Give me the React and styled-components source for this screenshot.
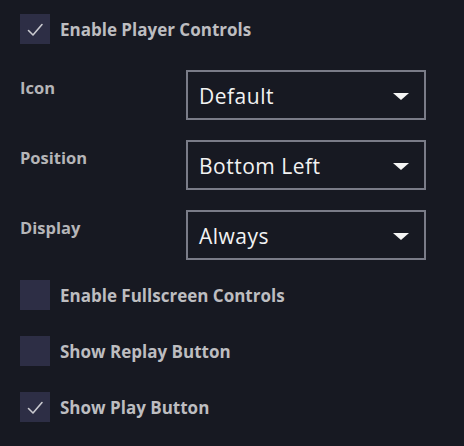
import React from "react";
import styled, { createGlobalStyle } from "styled-components";

const GlobalStyle = createGlobalStyle`
    html, body {
        margin: 0;
        padding: 0;
        background: #171922;
    }
    body {
        font-family: "Open Sans", "Noto Sans", sans-serif;
    }
`;

const options = [
    { label: "Icon", value: "Default" },
    { label: "Position", value: "Bottom Left" },
    { label: "Display", value: "Always" },
];

const toggles = [
    { label: "Enable Fullscreen Controls", checked: false },
    { label: "Show Replay Button", checked: false },
    { label: "Show Play Button", checked: true },
];

function CheckRow({ label, checked }) {
    return (
        <Row>
            <Box>
                {checked ? (
                    <svg width="30" height="30" viewBox="0 0 30 30">
                        <path
                            d="M8.5 16.5 L13 21 L22 10.5"
                            fill="none"
                            stroke="#c9c9cf"
                            strokeWidth="1.6"
                            strokeLinecap="round"
                            strokeLinejoin="round"
                        />
                    </svg>
                ) : null}
            </Box>
            <CheckLabel>{label}</CheckLabel>
        </Row>
    );
}

export default function App() {
    return (
        <>
            <GlobalStyle />
            <Panel>
                <CheckRow label="Enable Player Controls" checked />
                <Selects>
                    {options.map(o => (
                        <Field key={o.label}>
                            <FieldLabel>{o.label}</FieldLabel>
                            <Select>
                                <Value>{o.value}</Value>
                                <Caret />
                            </Select>
                        </Field>
                    ))}
                </Selects>
                <Toggles>
                    {toggles.map(t => (
                        <CheckRow key={t.label} label={t.label} checked={t.checked} />
                    ))}
                </Toggles>
            </Panel>
        </>
    );
}

const Panel = styled.div`
    width: 464px;
    height: 446px;
    box-sizing: border-box;
    padding: 14px 20px;
    display: flex;
    flex-direction: column;
    gap: 26px;
`;

const Row = styled.div`
    display: flex;
    align-items: center;
    gap: 10px;
    height: 30px;
`;

const Box = styled.div`
    width: 30px;
    height: 30px;
    background: #2d2e45;
    display: flex;
`;

const CheckLabel = styled.span`
    font-size: 17px;
    font-weight: 700;
    color: #bdbdc0;
`;

const Selects = styled.div`
    display: flex;
    flex-direction: column;
    gap: 20px;
`;

const Toggles = styled.div`
    margin-top: -6px;
    display: flex;
    flex-direction: column;
    gap: 26px;
`;

const Field = styled.div`
    display: flex;
    align-items: flex-start;
`;

const FieldLabel = styled.div`
    width: 166px;
    padding-top: 6px;
    font-size: 16.5px;
    font-weight: 700;
    color: #b5b5b8;
`;

const Select = styled.div`
    width: 240px;
    height: 50px;
    box-sizing: border-box;
    border: 2px solid #7a7c88;
    display: flex;
    align-items: center;
    justify-content: space-between;
    padding: 0 15px 0 11px;
    font-size: 21px;
    letter-spacing: 0.5px;
    color: #f2f2f2;
    font-family: "Open Sans", "Noto Sans", sans-serif;
`;

const Value = styled.span`
    padding-top: 2px;
`;

const Caret = styled.span`
    width: 0;
    height: 0;
    margin-top: 2px;
    border-left: 8px solid transparent;
    border-right: 8px solid transparent;
    border-top: 7px solid #f5f5f5;
`;
